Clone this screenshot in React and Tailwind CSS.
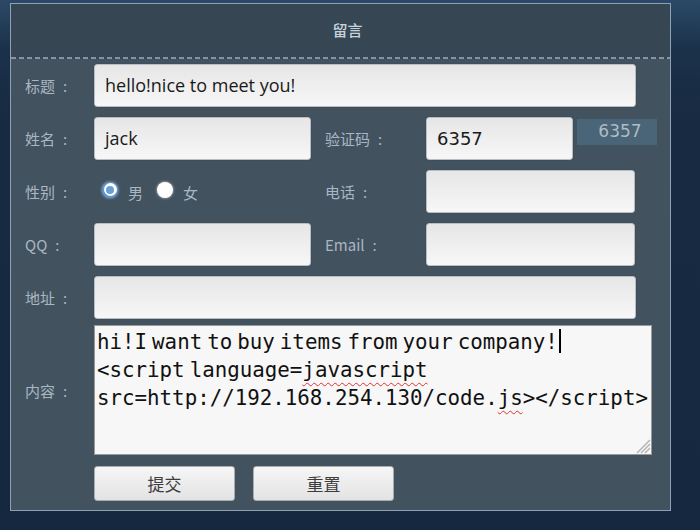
import React from "react";

const cjk = "font-['Noto_Sans_CJK_SC','Noto_Sans',sans-serif]";

function Label({ children, w = "w-[69px]" }) {
  return (
    <div className={`${w} shrink-0 text-[15px] leading-none text-[#a9b7c3] whitespace-pre ${cjk}`}>
      {children}
      <span className="ml-[8px]">:</span>
    </div>
  );
}

function Input({ w, value, font = "font-['Open_Sans',sans-serif]" }) {
  return (
    <div
      className={`${w} h-[43px] shrink-0 rounded-[3px] border border-[#b9bec3] bg-gradient-to-b from-[#e6e6e6] to-[#f7f7f7] shadow-[0_0_1px_rgba(0,0,0,0.4)] flex items-center pl-[10px] text-[18px] text-[#1a1a1a] ${font}`}
    >
      {value}
    </div>
  );
}

function Radio({ checked }) {
  if (checked) {
    return (
      <div className="w-[16px] h-[16px] rounded-full bg-[#5e95cc] shadow-[0_0_3px_#8fc0f0] flex items-center justify-center">
        <div className="w-[13px] h-[13px] rounded-full bg-white flex items-center justify-center">
          <div className="w-[8px] h-[8px] rounded-full bg-[#6a9fd6]" />
        </div>
      </div>
    );
  }
  return <div className="w-[16px] h-[16px] rounded-full bg-white shadow-[0_0_3px_rgba(255,255,255,0.7)]" />;
}

function Button({ children }) {
  return (
    <div
      className={`w-[141px] h-[35px] rounded-[3px] border border-[#a9adb1] bg-gradient-to-b from-[#f6f6f6] to-[#e3e3e3] flex items-center justify-center text-[17px] text-[#3d3d3d] ${cjk}`}
    >
      {children}
    </div>
  );
}

export default function App() {
  return (
    <div className="w-[700px] h-[530px] bg-[linear-gradient(180deg,#2b4966_0px,#1b314a_50px,#172a41_120px,#162840_530px)] pl-[10px] pt-[3px]">
      <div className="w-[661px] h-[508px] border border-[#8ea2b4] flex flex-col bg-[#43525f]">
        {/* header */}
        <div className="h-[53px] bg-[#374653] flex items-center justify-center pl-[14px]">
          <span className={`text-[15px] font-medium text-[#c7d4df] ${cjk}`}>留言</span>
        </div>
        <div className="h-[2px] bg-[#374653]">
          <div className="h-[2px] bg-[repeating-linear-gradient(90deg,#8496a6_0px,#8496a6_5px,transparent_5px,transparent_8px)]" />
        </div>
        {/* body */}
        <div className="flex flex-col pl-[14px] pt-[5px]">
          <div className="flex items-center h-[43px]">
            <Label>标题</Label>
            <Input w="w-[542px]" value="hello!nice to meet you!" />
          </div>
          <div className="flex items-center h-[43px] mt-[10px]">
            <Label>姓名</Label>
            <Input w="w-[217px]" value="jack" />
            <div className="w-[14px]" />
            <Label w="w-[101px]">验证码</Label>
            <Input w="w-[147px]" value="6357" font="font-['DejaVu_Sans',sans-serif]" />
            <div className="ml-[4px] w-[80px] h-[26px] self-start mt-[2px] bg-[#4a6478] flex items-center justify-center pl-[6px] text-[17px] text-[#b0bbc4] font-['DejaVu_Sans',sans-serif]">
              6357
            </div>
          </div>
          <div className="flex items-center h-[43px] mt-[10px]">
            <Label>性别</Label>
            <div className={`w-[217px] shrink-0 flex items-center text-[15px] text-[#a9b7c3] ${cjk}`}>
              <div className="ml-[8px] -mt-[4px]"><Radio checked /></div>
              <span className="ml-[10px] mt-[4px]">男</span>
              <div className="ml-[14px] -mt-[3px]"><Radio /></div>
              <span className="ml-[10px] mt-[4px]">女</span>
            </div>
            <div className="w-[14px]" />
            <Label w="w-[101px]">电话</Label>
            <Input w="w-[209px]" value="" />
          </div>
          <div className="flex items-center h-[43px] mt-[10px]">
            <Label>QQ</Label>
            <Input w="w-[217px]" value="" />
            <div className="w-[14px]" />
            <Label w="w-[101px]">Email</Label>
            <Input w="w-[209px]" value="" />
          </div>
          <div className="flex items-center h-[43px] mt-[10px]">
            <Label>地址</Label>
            <Input w="w-[542px]" value="" />
          </div>
          <div className="flex items-center h-[130px] mt-[6px]">
            <Label>内容</Label>
            <div className="relative w-[558px] h-[130px] shrink-0 border border-[#9a9a9a] bg-[#f7f7f7] pl-[2px] pt-[2px] font-['DejaVu_Sans_Mono',monospace] text-[20.8px] leading-[28px] text-[#111] [word-spacing:-7.5px] whitespace-pre">
              <div>
                hi!I want to buy items from your company!
                <span className="inline-block w-[2px] h-[24px] bg-black align-middle ml-[1px] -mt-[4px]" />
              </div>
              <div>
                {"<script language="}
                <span className="underline decoration-wavy decoration-[#e03030] decoration-1 underline-offset-[5px]">javascript</span>
              </div>
              <div>
                {"src=http://192.168.254.130/code."}
                <span className="underline decoration-wavy decoration-[#e03030] decoration-1 underline-offset-[5px]">js</span>
                {"></script>"}
              </div>
              <svg className="absolute right-0 bottom-0" width="17" height="17" viewBox="0 0 17 17">
                <path d="M16 3 L3 16 M16 7 L7 16 M16 11 L11 16" stroke="#b5b5b5" strokeWidth="1.5" />
              </svg>
            </div>
          </div>
          <div className="flex items-center mt-[11px] pl-[69px] gap-[18px]">
            <Button>提交</Button>
            <Button>重置</Button>
          </div>
        </div>
      </div>
    </div>
  );
}
